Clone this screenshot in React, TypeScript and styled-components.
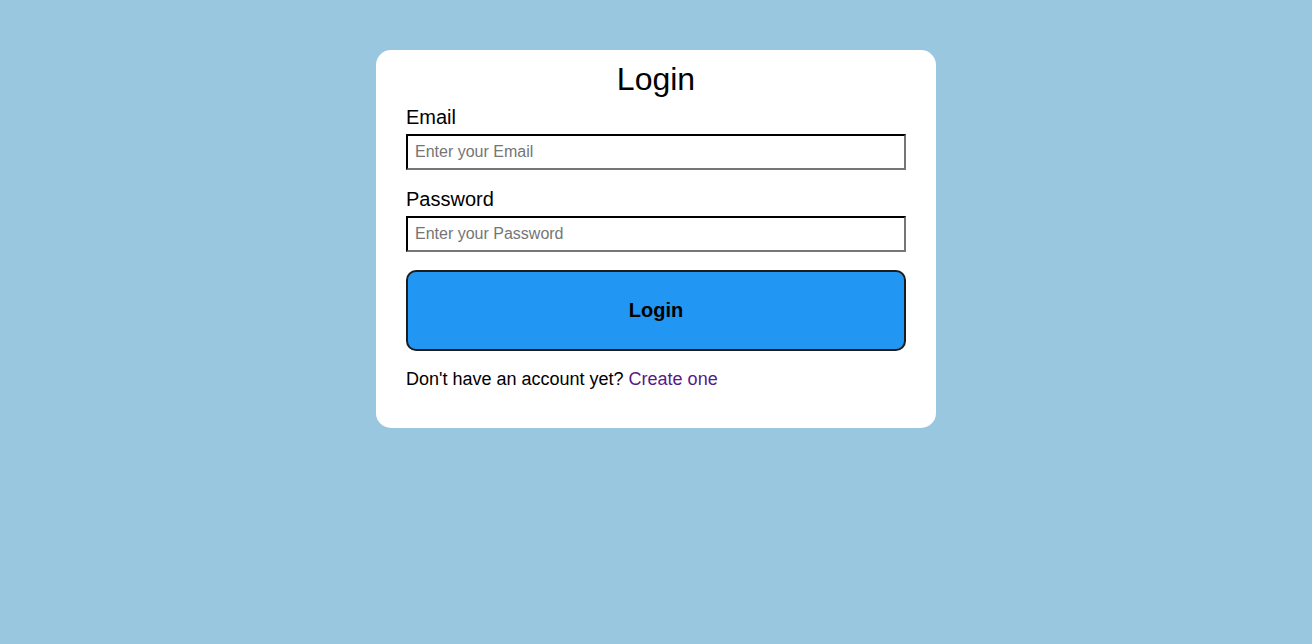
import React from "react";
import styled, { createGlobalStyle } from "styled-components";

const Global = createGlobalStyle`
  html, body { margin: 0; padding: 0; }
  body {
    background: #9ac7e0;
    font-family: "Liberation Sans", Arial, sans-serif;
    min-height: 644px;
  }
`;

const Page = styled.div`
  display: flex;
  justify-content: center;
  padding-top: 50px;
`;

const Card = styled.form`
  width: 500px;
  background: #ffffff;
  border-radius: 15px;
  padding: 11px 30px 38px;
  display: flex;
  flex-direction: column;
`;

const Title = styled.h1`
  margin: 0 0 8px;
  font-size: 32px;
  font-weight: 400;
  text-align: center;
  line-height: 37px;
  color: #000;
`;

const Field = styled.div`
  display: flex;
  flex-direction: column;
  gap: 5px;
  margin-bottom: 18px;
  &:last-of-type { margin-bottom: 18px; }
`;

const Label = styled.label`
  font-size: 20px;
  line-height: 23px;
  color: #000;
`;

const Input = styled.input`
  box-sizing: border-box;
  height: 36px;
  width: 100%;
  border: 2px inset #767676;
  border-top-color: #1a1a1a;
  border-left-color: #1a1a1a;
  padding: 0 7px;
  font-size: 16px;
  font-family: "Liberation Sans", Arial, sans-serif;
  &::placeholder { color: #757575; }
`;

const Button = styled.button`
  box-sizing: border-box;
  height: 81px;
  background: #2196f3;
  border: 2px solid #1c1c1c;
  border-radius: 10px;
  font-family: "Liberation Sans", Arial, sans-serif;
  font-size: 20px;
  font-weight: 700;
  color: #000;
`;

const Footer = styled.p`
  margin: 18px 0 0;
  font-size: 18px;
  line-height: 21px;
  color: #000;
`;

const Link = styled.a`
  color: #551a8b;
  text-decoration: none;
`;

export default function App() {
  return (
    <>
      <Global />
      <Page>
        <Card onSubmit={(e) => e.preventDefault()}>
          <Title>Login</Title>
          <Field>
            <Label htmlFor="email">Email</Label>
            <Input id="email" type="email" placeholder="Enter your Email" />
          </Field>
          <Field>
            <Label htmlFor="password">Password</Label>
            <Input id="password" type="password" placeholder="Enter your Password" />
          </Field>
          <Button type="submit">Login</Button>
          <Footer>
            Don't have an account yet? <Link href="#">Create one</Link>
          </Footer>
        </Card>
      </Page>
    </>
  );
}
